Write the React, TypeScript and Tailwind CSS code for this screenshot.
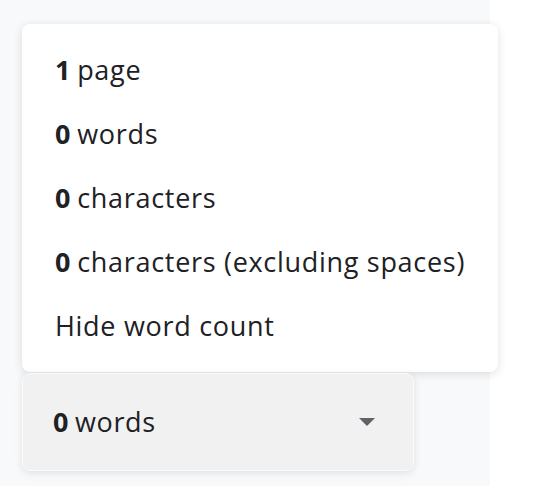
import React from "react";

const rows: { b?: string; t: string }[] = [
  { b: "1", t: "page" },
  { b: "0", t: "words" },
  { b: "0", t: "characters" },
  { b: "0", t: "characters (excluding spaces)" },
  { t: "Hide word count" },
];

export default function App() {
  return (
    <div
      className="relative flex h-[486px] w-[534px] overflow-hidden bg-white text-[#202124]"
      style={{ fontFamily: "'Open Sans', 'Noto Sans', sans-serif" }}
    >
      <div className="h-full w-[490px] bg-[#f8f9fa] shadow-[2px_0_6px_rgba(0,0,0,0.08)]" />
      <div className="flex-1 bg-white" />

      <div className="absolute left-[22px] top-[24px] flex w-[476px] flex-col rounded-lg bg-white py-[14px] pl-[33px] shadow-[0_2px_10px_rgba(0,0,0,0.12)]">
        {rows.map((r, i) => (
          <div key={i} className="flex h-16 items-center text-[27px] tracking-[0.7px]">
            {r.b && <span className="mr-[6px] font-bold">{r.b}</span>}
            <span>{r.t}</span>
          </div>
        ))}
      </div>

      <div className="absolute left-[22px] top-[373px] flex h-[98px] w-[392px] items-center justify-between rounded-lg border border-[#fafafa] bg-[#f1f1f1] pl-[30px] pr-[38px] shadow-[0_2px_8px_rgba(0,0,0,0.1)]">
        <div className="flex items-center text-[27px] tracking-[0.6px]">
          <span className="mr-[6px] font-bold">0</span>
          <span>words</span>
        </div>
        <svg width="16" height="9" viewBox="0 0 16 9">
          <path d="M0 0 L16 0 L8 8 Z" fill="#5f6368" />
        </svg>
      </div>
    </div>
  );
}
